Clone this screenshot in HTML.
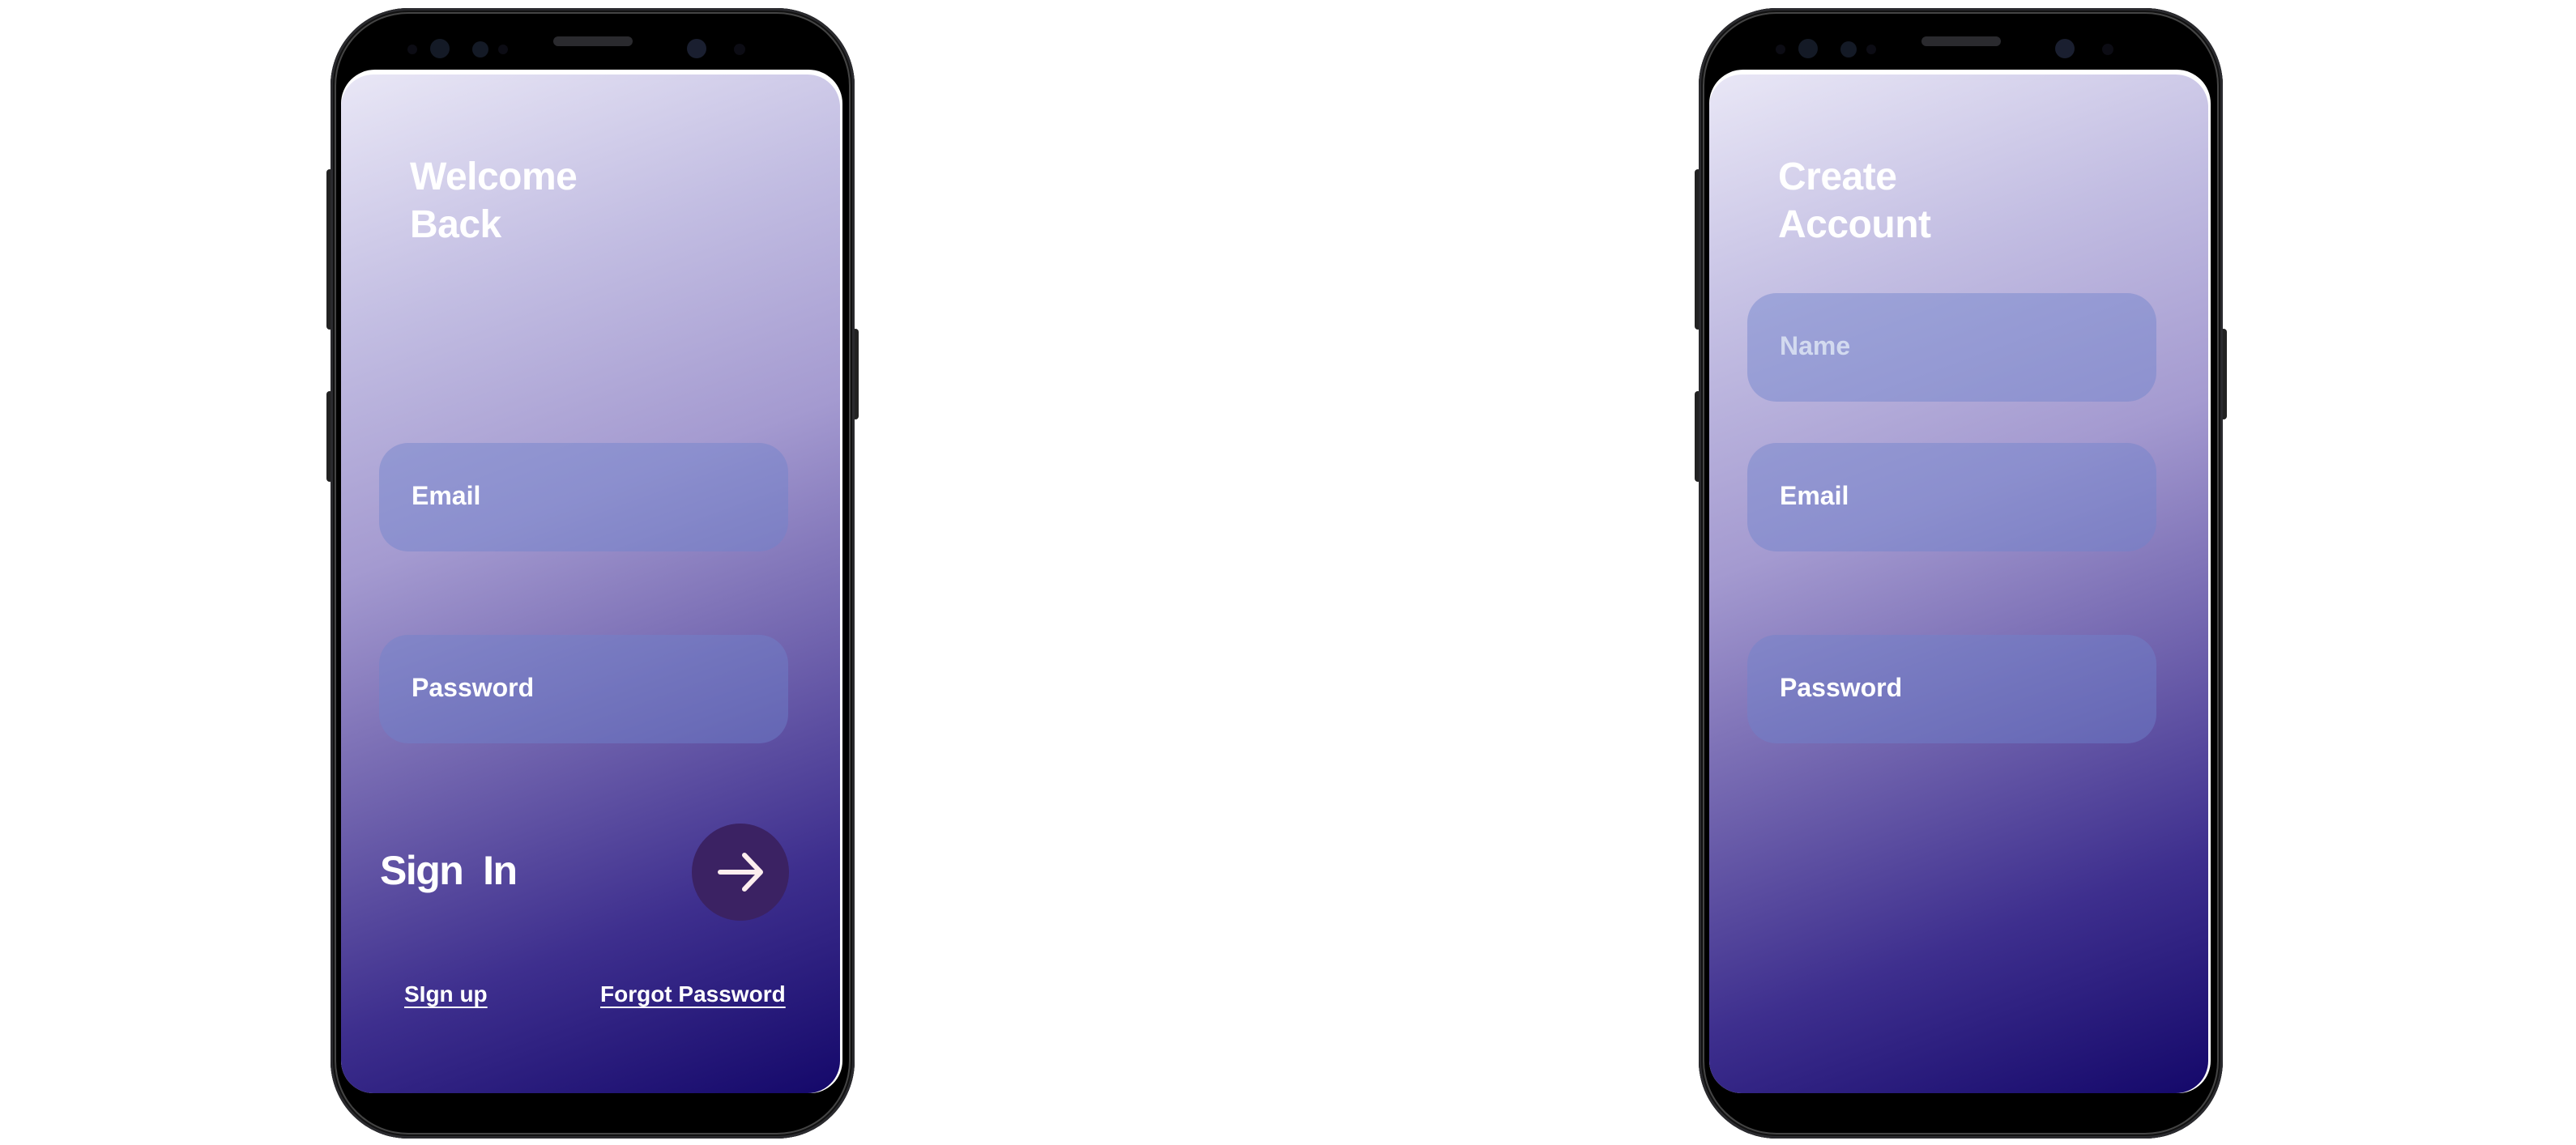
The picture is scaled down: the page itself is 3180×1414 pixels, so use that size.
<!DOCTYPE html>
<html><head><style>
html,body{margin:0;padding:0;background:#fff;width:3180px;height:1414px;overflow:hidden;font-family:"Liberation Sans",sans-serif}
.ph{position:absolute;top:10px;width:647px;height:1396px}
.body{position:absolute;left:0;top:0;width:647px;height:1396px;border-radius:96px;background:#000;box-shadow:inset 0 0 0 3px #2a2a2e,inset 0 0 0 5px #111,inset 0 0 0 7px #444}
.btn{position:absolute;background:#222;border-radius:4px;width:8px}
.scr{position:absolute;left:13px;top:76px;width:619px;height:1264px;border-radius:42px 42px 40px 40px;background:#fff}
.grad{position:absolute;left:0;top:6px;width:616px;height:1258px;border-radius:40px;background:linear-gradient(160deg,#e9e7f6 0%,#c2bde2 22%,#a49ad0 42%,#6f62ad 62%,#3e2f8e 80%,#14086a 100%);overflow:hidden}
.t{position:absolute;color:#fff;font-weight:bold}
.h{font-size:48px;line-height:59px;left:85px;top:97px;letter-spacing:-0.5px}
.f{position:absolute;left:47px;width:505px;height:134px;border-radius:36px;background:rgba(110,130,205,.45)}
.f span{position:absolute;left:40px;top:47px;font-size:32px;font-weight:bold;color:#fff}
.sp{position:absolute;border-radius:50%;background:#0c0c14}
</style></head><body>

<div class="ph" style="left:408px">
 <div class="btn" style="left:-5px;top:199px;height:198px"></div>
 <div class="btn" style="left:-5px;top:473px;height:112px"></div>
 <div class="btn" style="left:644px;top:396px;height:112px"></div>
 <div class="body"></div>
 <div class="sp" style="left:95px;top:45px;width:12px;height:12px"></div>
 <div class="sp" style="left:123px;top:38px;width:24px;height:24px;background:#141a26"></div>
 <div class="sp" style="left:175px;top:41px;width:20px;height:20px;background:#141a26"></div>
 <div class="sp" style="left:207px;top:45px;width:12px;height:12px"></div>
 <div style="position:absolute;left:275px;top:35px;width:98px;height:12px;border-radius:6px;background:#2a2a2e"></div>
 <div class="sp" style="left:440px;top:38px;width:24px;height:24px;background:#1a1f30"></div>
 <div class="sp" style="left:498px;top:44px;width:14px;height:14px"></div>
 <div class="scr"><div class="grad">
  <div class="t h">Welcome<br>Back</div>
  <div class="f" style="top:455px"><span>Email</span></div>
  <div class="f" style="top:692px"><span>Password</span></div>
  <div class="t" style="left:48px;top:954px;font-size:50px;letter-spacing:-1.5px">Sign&nbsp; In</div>
  <div style="position:absolute;left:433px;top:925px;width:120px;height:120px;border-radius:50%;background:#3b2263"></div>
  <svg style="position:absolute;left:460px;top:952px" width="66" height="66" viewBox="0 0 66 66"><path d="M8 33H58M38 12L58 33L38 54" stroke="#fdeeee" stroke-width="6" fill="none" stroke-linecap="round" stroke-linejoin="round"/></svg>
  <div class="t" style="left:78px;top:1120px;font-size:28px;text-decoration:underline;text-underline-offset:6px">SIgn up</div>
  <div class="t" style="left:320px;top:1120px;font-size:28px;text-decoration:underline;text-underline-offset:6px">Forgot Password</div>
 </div></div>
</div>

<div class="ph" style="left:2097px">
 <div class="btn" style="left:-5px;top:199px;height:198px"></div>
 <div class="btn" style="left:-5px;top:473px;height:112px"></div>
 <div class="btn" style="left:644px;top:396px;height:112px"></div>
 <div class="body"></div>
 <div class="sp" style="left:95px;top:45px;width:12px;height:12px"></div>
 <div class="sp" style="left:123px;top:38px;width:24px;height:24px;background:#141a26"></div>
 <div class="sp" style="left:175px;top:41px;width:20px;height:20px;background:#141a26"></div>
 <div class="sp" style="left:207px;top:45px;width:12px;height:12px"></div>
 <div style="position:absolute;left:275px;top:35px;width:98px;height:12px;border-radius:6px;background:#2a2a2e"></div>
 <div class="sp" style="left:440px;top:38px;width:24px;height:24px;background:#1a1f30"></div>
 <div class="sp" style="left:498px;top:44px;width:14px;height:14px"></div>
 <div class="scr"><div class="grad">
  <div class="t h">Create<br>Account</div>
  <div class="f" style="top:270px"><span style="color:rgba(225,232,245,.8)">Name</span></div>
  <div class="f" style="top:455px"><span>Email</span></div>
  <div class="f" style="top:692px"><span>Password</span></div>
 </div></div>
</div>

</body></html>
